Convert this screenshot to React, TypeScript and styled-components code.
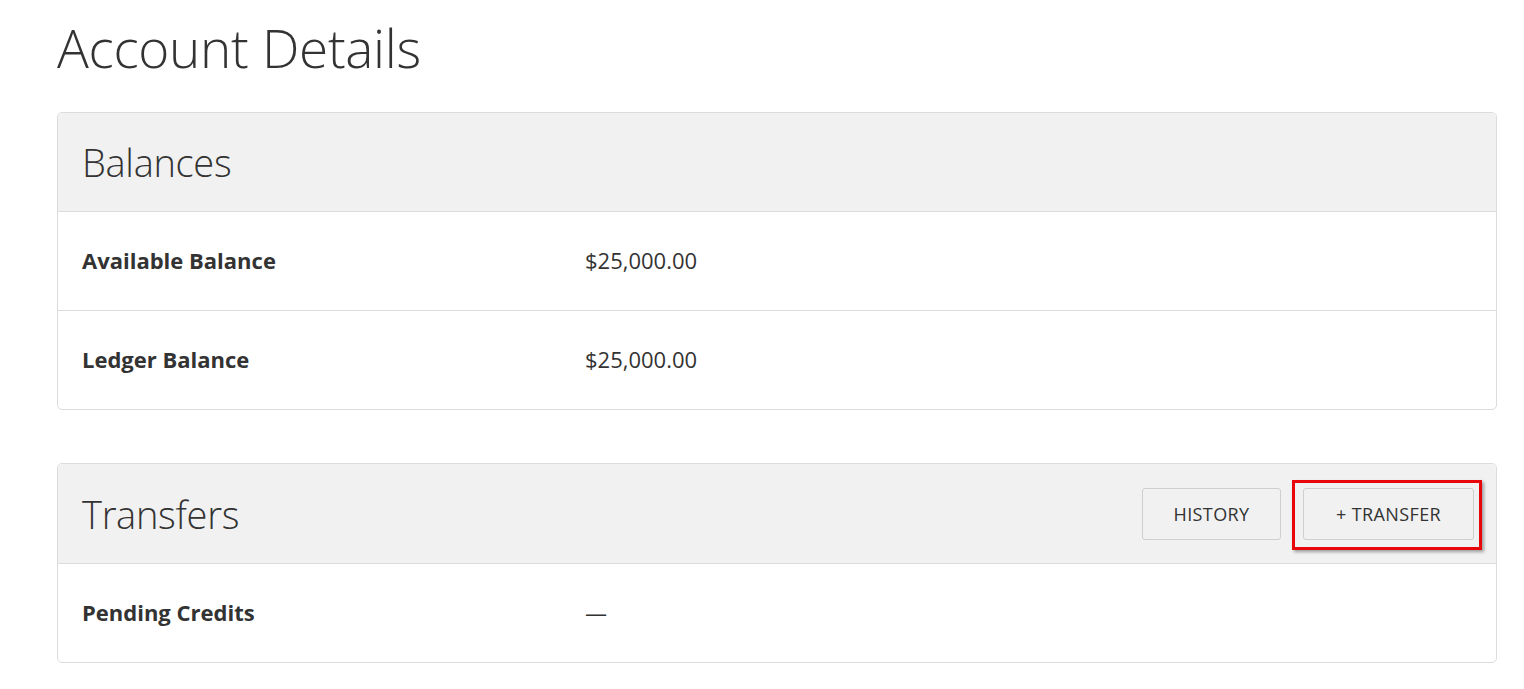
import React from "react";
import styled, { createGlobalStyle } from "styled-components";

const Global = createGlobalStyle`
  html, body { margin: 0; padding: 0; background: #fff; }
  body { font-family: "Open Sans", "Liberation Sans", sans-serif; color: #333; }
`;

const Page = styled.div`
  padding: 0 27px 0 57px;
  display: flex;
  flex-direction: column;
`;

const Title = styled.h1`
  margin: 15px 0 0 0;
  font-weight: 300;
  font-size: 53px;
  line-height: 66px;
  color: #333;
  letter-spacing: -0.3px;
`;

const Card = styled.section<{ $mt: number }>`
  margin-top: ${(p) => p.$mt}px;
  border: 1px solid #dcdcdc;
  border-radius: 5px;
  display: flex;
  flex-direction: column;
`;

const CardHeader = styled.div<{ $h: number }>`
  height: ${(p) => p.$h}px;
  background: #f1f1f1;
  border-bottom: 1px solid #dcdcdc;
  border-radius: 5px 5px 0 0;
  display: flex;
  align-items: center;
  justify-content: space-between;
  padding: 0 22px 0 24px;
`;

const CardTitle = styled.h2`
  margin: 0;
  font-weight: 300;
  font-size: 38px;
  color: #333;
  letter-spacing: -0.3px;
`;

const Row = styled.div<{ $last?: boolean }>`
  display: grid;
  grid-template-columns: 503px 1fr;
  align-items: center;
  padding: 0 24px 2px 24px;
  box-sizing: content-box;
  height: 96px;
  border-bottom: ${(p) => (p.$last ? "none" : "1px solid #dcdcdc")};
`;

const Label = styled.div`
  font-weight: 700;
  font-size: 22px;
  color: #333;
`;

const Value = styled.div`
  font-size: 22px;
  color: #333;
`;

const Actions = styled.div`
  display: flex;
  gap: 22px;
  align-items: center;
`;

const Button = styled.button<{ $w: number }>`
  position: relative;
  width: ${(p) => p.$w}px;
  height: 52px;
  background: #f1f1f1;
  border: 1px solid #cfcfcf;
  border-radius: 3px;
  font-family: "Open Sans", "Liberation Sans", sans-serif;
  font-size: 18px;
  letter-spacing: 0.4px;
  color: #333;
  padding: 0;
  cursor: pointer;
`;

const Highlight = styled.span`
  position: absolute;
  left: -12px;
  top: -9px;
  right: -9px;
  bottom: -11px;
  border: 3px solid #e8060a;
  box-shadow: 2px 2px 3px rgba(0, 0, 0, 0.35);
  pointer-events: none;
`;

export default function App() {
  return (
    <>
      <Global />
      <Page>
        <Title>Account Details</Title>
        <Card $mt={31}>
          <CardHeader $h={98}>
            <CardTitle>Balances</CardTitle>
          </CardHeader>
          <Row>
            <Label>Available Balance</Label>
            <Value>$25,000.00</Value>
          </Row>
          <Row $last>
            <Label>Ledger Balance</Label>
            <Value>$25,000.00</Value>
          </Row>
        </Card>
        <Card $mt={53}>
          <CardHeader $h={99}>
            <CardTitle>Transfers</CardTitle>
            <Actions>
              <Button $w={139}>HISTORY</Button>
              <Button $w={171}>
                + TRANSFER
                <Highlight />
              </Button>
            </Actions>
          </CardHeader>
          <Row $last>
            <Label>Pending Credits</Label>
            <Value>—</Value>
          </Row>
        </Card>
      </Page>
    </>
  );
}
